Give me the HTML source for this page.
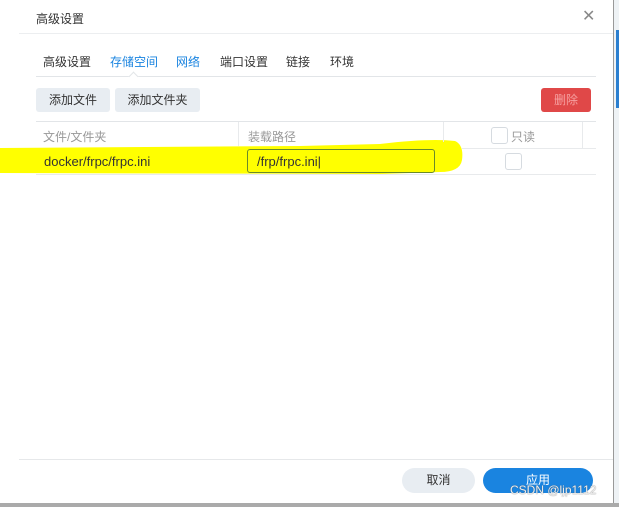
<!DOCTYPE html>
<html><head><meta charset="utf-8"><style>
body{margin:0;width:619px;height:507px;overflow:hidden;background:#fff;position:relative;font-family:"Liberation Sans","Noto Sans CJK SC",sans-serif;}
.a{position:absolute;}
.t{font-size:12px;color:#333;white-space:nowrap;}
.btn{position:absolute;background:#e8edf2;border-radius:3px;font-size:12px;color:#333;text-align:center;line-height:24px;}
.cb{position:absolute;width:15px;height:15px;border:1px solid #d6dbe0;border-radius:3px;background:#fff;}
</style></head><body>
<svg class="a" style="left:0;top:0" width="619" height="507"><path d="M0 148 L300 146 L380 144 Q430 138 455 141 Q464 145 462 160 Q460 172 440 172 L380 174 L0 173 Z" fill="#ffff00"/></svg>
<div class="a" style="left:0;top:503px;width:619px;height:4px;background:#aaa"></div>
<div class="a" style="left:613px;top:0;width:6px;height:503px;background:#eef2f5;border-left:1px solid #999"></div>
<div class="a" style="left:616px;top:30px;width:3px;height:78px;background:#2b7fd0"></div>
<div class="a t" style="left:36px;top:10px">高级设置</div>
<div class="a" style="left:582px;top:6px;font-size:16px;color:#888">✕</div>
<div class="a" style="left:19px;top:33px;width:594px;height:1px;background:#eceef0"></div>
<div class="a t" style="left:43px;top:53px">高级设置</div>
<div class="a t" style="left:110px;top:53px;color:#1a84e0">存储空间</div>
<div class="a t" style="left:176px;top:53px;color:#1a84e0">网络</div>
<div class="a t" style="left:220px;top:53px">端口设置</div>
<div class="a t" style="left:286px;top:53px">链接</div>
<div class="a t" style="left:330px;top:53px">环境</div>
<div class="a" style="left:36px;top:76px;width:560px;height:1px;background:#e2e5e8"></div>
<div class="a" style="left:130px;top:73px;width:6px;height:6px;background:#fff;border-left:1px solid #e2e5e8;border-top:1px solid #e2e5e8;transform:rotate(45deg)"></div>
<div class="btn" style="left:36px;top:88px;width:74px">添加文件</div>
<div class="btn" style="left:115px;top:88px;width:85px">添加文件夹</div>
<div class="btn" style="left:541px;top:88px;width:50px;background:#e04848;color:#f6a0a0">删除</div>
<div class="a" style="left:36px;top:121px;width:560px;height:1px;background:#e2e5e8"></div>
<div class="a" style="left:462px;top:148px;width:134px;height:1px;background:#e8eaec"></div>
<div class="a" style="left:36px;top:174px;width:560px;height:1px;background:#e8eaec"></div>
<div class="a" style="left:238px;top:122px;width:1px;height:24px;background:#e8eaec"></div>
<div class="a" style="left:443px;top:122px;width:1px;height:20px;background:#e8eaec"></div>
<div class="a" style="left:582px;top:122px;width:1px;height:26px;background:#e8eaec"></div>
<div class="a t" style="left:43px;top:128px;color:#999">文件/文件夹</div>
<div class="a t" style="left:248px;top:128px;color:#999">装载路径</div>
<div class="cb" style="left:491px;top:127px"></div>
<div class="a t" style="left:511px;top:128px;color:#999">只读</div>
<div class="a t" style="left:44px;top:154px;font-size:13px;color:#333">docker/frpc/frpc.ini</div>
<div class="a" style="left:247px;top:149px;width:186px;height:22px;border:1px solid #6a8a2a;border-radius:3px;background:#ffff00"></div>
<div class="a t" style="left:257px;top:154px;font-size:13px;color:#333">/frp/frpc.ini|</div>
<div class="cb" style="left:505px;top:153px"></div>
<div class="a" style="left:19px;top:459px;width:594px;height:1px;background:#e6e8ea"></div>
<div class="btn" style="left:402px;top:468px;width:73px;height:25px;line-height:25px;border-radius:13px">取消</div>
<div class="btn" style="left:483px;top:468px;width:110px;height:25px;line-height:25px;border-radius:13px;background:#1a84e0;color:#fff">应用</div>
<div class="a" style="left:510px;top:483px;font-size:12px;color:#eee;text-shadow:0 0 1px #555">CSDN @ljp1112</div>
</body></html>
